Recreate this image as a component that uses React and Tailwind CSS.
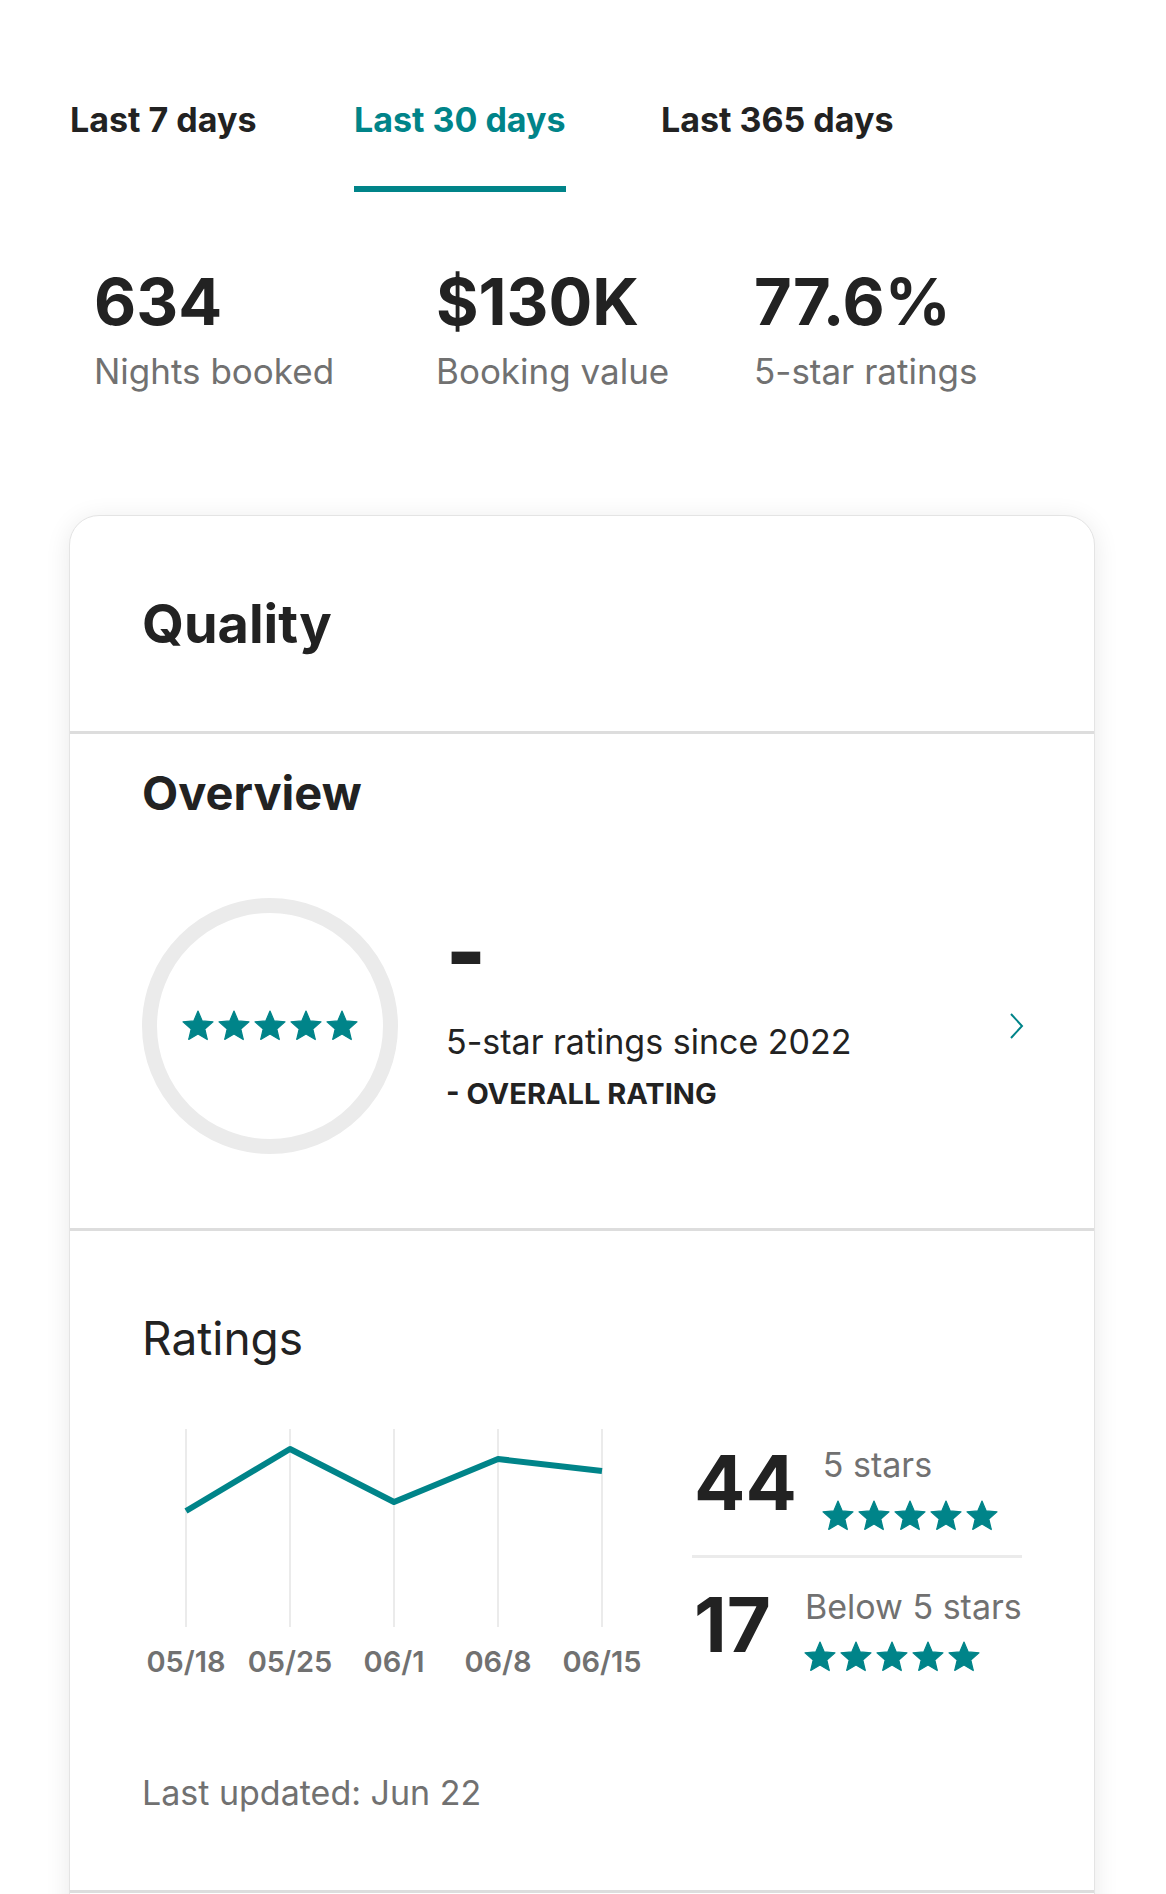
const STAR_PATH =
    'M12 17.27L18.18 21l-1.64-7.03L22 9.24l-7.19-.61L12 2 9.19 8.63 2 9.24l5.46 4.73L5.82 21z';

const Stars = ({ starClass }) => {
    return (
        <div className="flex">
            {[0, 1, 2, 3, 4].map((i) => (
                <svg key={i} viewBox="0 0 24 24" className={starClass}>
                    <path d={STAR_PATH} fill="#008489" stroke="#008489" strokeWidth="0.8" strokeLinejoin="round" />
                </svg>
            ))}
        </div>
    );
};

const tabs = [
    { label: 'Last 7 days', width: 'w-[284px]', active: false },
    { label: 'Last 30 days', width: 'w-[307px]', active: true },
    { label: 'Last 365 days', width: 'w-auto', active: false },
];

const stats = [
    { value: '634', label: 'Nights booked', width: 'w-[342px]' },
    { value: '$130K', label: 'Booking value', width: 'w-[318px]' },
    { value: '77.6%', label: '5-star ratings', width: 'w-auto' },
];

const chartDates = ['05/18', '05/25', '06/1', '06/8', '06/15'];
const gridX = [52, 156, 260, 364, 468];
const points = [82, 20, 73, 30, 42];

const RatingsChart = () => {
    const line = gridX.map((x, i) => `${x},${points[i]}`).join(' ');
    return (
        <div className="w-[520px] ml-[-8px] shrink-0">
            <svg width="520" height="198" viewBox="0 0 520 198" className="block">
                {gridX.map((x) => (
                    <line key={x} x1={x} y1="0" x2={x} y2="198" stroke="#ebebeb" strokeWidth="2" />
                ))}
                <polyline points={line} fill="none" stroke="#008489" strokeWidth="6" strokeLinejoin="round" />
            </svg>
            <div className="grid grid-cols-5 mt-[19px]">
                {chartDates.map((d) => (
                    <div key={d} className="text-center text-[29px] leading-[32px] font-semibold text-[#717171]">
                        {d}
                    </div>
                ))}
            </div>
        </div>
    );
};

export default function App() {
    return (
        <div className="min-h-screen bg-white font-[Inter,sans-serif] text-[#222222] pb-[120px]">
            {/* Tabs */}
            <div className="flex pt-[99px] pl-[70px]">
                {tabs.map((tab) => (
                    <div key={tab.label} className={tab.width}>
                        <div className="inline-flex flex-col">
                            <span
                                className={`text-[34px] leading-[42px] font-bold ${
                                    tab.active ? 'text-[#008489]' : 'text-[#222222]'
                                }`}
                            >
                                {tab.label}
                            </span>
                            <div className={`mt-[45px] h-[6px] ${tab.active ? 'bg-[#008489]' : 'bg-transparent'}`} />
                        </div>
                    </div>
                ))}
            </div>

            {/* Stats */}
            <div className="flex pl-[94px] mt-[77px]">
                {stats.map((s) => (
                    <div key={s.label} className={s.width}>
                        <div className="text-[65px] leading-none font-bold">{s.value}</div>
                        <div className="mt-[16px] text-[35px] leading-[42px] text-[#717171]">{s.label}</div>
                    </div>
                ))}
            </div>

            {/* Card */}
            <div className="mt-[123px] ml-[69px] w-[1026px] bg-white border border-[#e4e4e4] rounded-[30px] shadow-[0_4px_26px_rgba(0,0,0,0.09)] overflow-hidden">
                <div className="pl-[72px] pt-[75px] pb-[75px]">
                    <h2 className="text-[54px] leading-[65px] font-bold">Quality</h2>
                </div>
                <div className="h-[3px] bg-[#dddddd]" />

                {/* Overview */}
                <div className="pl-[72px] pr-[70px] pt-[30px] pb-[74px]">
                    <h3 className="text-[47px] leading-[58px] font-bold">Overview</h3>
                    <div className="mt-[76px] flex items-start">
                        <div className="w-[256px] h-[256px] rounded-full border-[15px] border-[#ebebeb] flex items-center justify-center shrink-0">
                            <Stars starClass="w-[36px] h-[36px]" />
                        </div>
                        <div className="ml-[48px] mt-[12px] flex flex-col">
                            <span className="text-[84px] leading-[84px] font-black">-</span>
                            <span className="mt-[27px] text-[34px] leading-[42px]">5-star ratings since 2022</span>
                            <span className="mt-[14px] text-[29px] leading-[34px] font-bold">- OVERALL RATING</span>
                        </div>
                        <svg viewBox="0 0 16 28" className="ml-auto self-center w-[16px] h-[28px]">
                            <path d="M3 2 L14 14 L3 26" fill="none" stroke="#008489" strokeWidth="2" />
                        </svg>
                    </div>
                </div>
                <div className="h-[3px] bg-[#dddddd]" />

                {/* Ratings */}
                <div className="pl-[72px] pr-[70px] pt-[80px] pb-[77px]">
                    <h3 className="text-[46px] leading-[55px]">Ratings</h3>
                    <div className="mt-[63px] flex items-start">
                        <RatingsChart />
                        <div className="ml-[38px] mt-[15px] w-[330px] flex flex-col">
                            <div className="flex items-start gap-[26px] pl-[2px]">
                                <span className="text-[76px] leading-[76px] font-bold">44</span>
                                <div className="flex flex-col">
                                    <span className="text-[34px] leading-[41px] text-[#717171]">5 stars</span>
                                    <div className="mt-[13px] ml-[-3px]">
                                        <Stars starClass="w-[36px] h-[36px]" />
                                    </div>
                                </div>
                            </div>
                            <div className="mt-[21px] h-[3px] bg-[#ebebeb]" />
                            <div className="mt-[28px] flex items-start gap-[34px] pl-[2px]">
                                <span className="text-[76px] leading-[76px] font-bold">17</span>
                                <div className="flex flex-col">
                                    <span className="text-[34px] leading-[41px] text-[#717171]">Below 5 stars</span>
                                    <div className="mt-[12px] ml-[-3px]">
                                        <Stars starClass="w-[36px] h-[36px]" />
                                    </div>
                                </div>
                            </div>
                        </div>
                    </div>
                    <p className="mt-[94px] text-[34px] leading-[41px] text-[#717171]">Last updated: Jun 22</p>
                </div>
                <div className="h-[3px] bg-[#dddddd]" />
                <div className="h-[200px]" />
            </div>
        </div>
    );
}
